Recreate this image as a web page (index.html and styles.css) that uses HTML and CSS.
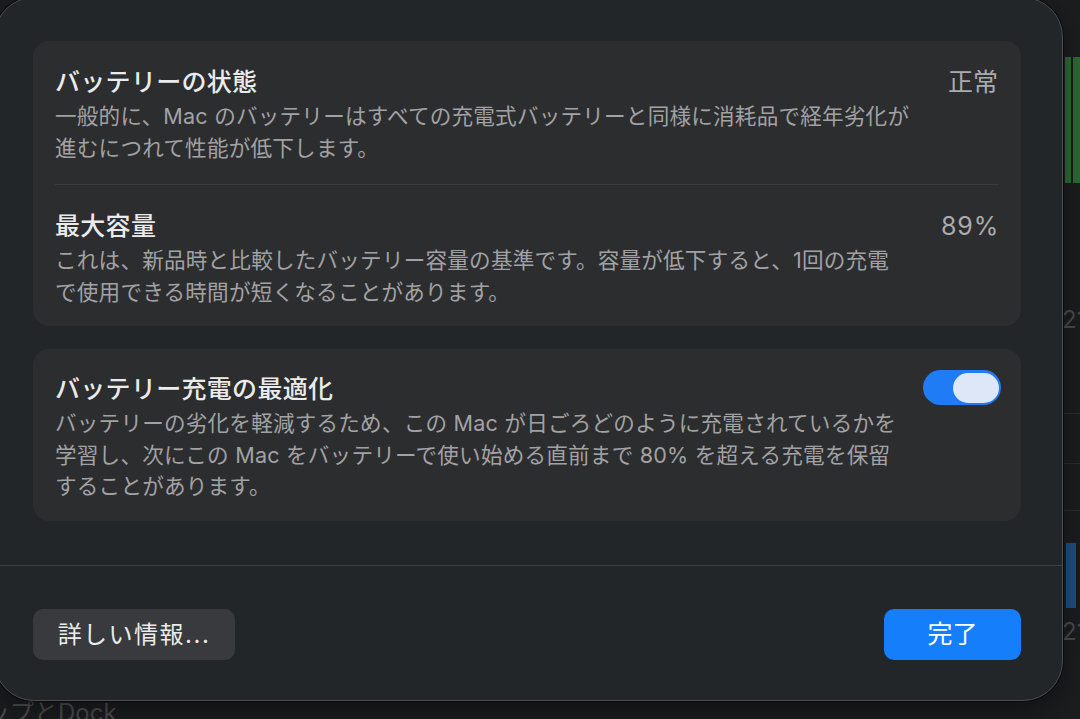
FILE: index.html
```html
<!DOCTYPE html>
<html lang="ja">
<head>
<meta charset="utf-8">
<title>バッテリーの状態</title>
<link rel="stylesheet" href="styles.css">
</head>
<body>
<div class="backdrop" aria-hidden="true">
  <div class="bar-green bar-green-a"></div>
  <div class="bar-green bar-green-b"></div>
  <div class="bg-label bg-label-a">21</div>
  <div class="bg-rule bg-rule-a"></div>
  <div class="bg-rule bg-rule-b"></div>
  <div class="bg-rule bg-rule-c"></div>
  <div class="bar-blue"></div>
  <div class="bg-label bg-label-b">21</div>
  <div class="bg-dock">ップとDock</div>
</div>

<div class="sheet">
  <div class="content">
    <section class="card">
      <div class="row">
        <div class="text">
          <div class="title">バッテリーの状態</div>
          <div class="desc">一般的に、Mac のバッテリーはすべての充電式バッテリーと同様に消耗品で経年劣化が<br>進むにつれて性能が低下します。</div>
        </div>
        <div class="value">正常</div>
      </div>
      <div class="row row-second">
        <div class="text">
          <div class="title">最大容量</div>
          <div class="desc">これは、新品時と比較したバッテリー容量の基準です。容量が低下すると、1回の充電<br>で使用できる時間が短くなることがあります。</div>
        </div>
        <div class="value value-num">89%</div>
      </div>
    </section>

    <section class="card card-toggle">
      <div class="row row-toggle">
        <div class="text">
          <div class="title">バッテリー充電の最適化</div>
          <div class="desc">バッテリーの劣化を軽減するため、この Mac が日ごろどのように充電されているかを<br>学習し、次にこの Mac をバッテリーで使い始める直前まで 80% を超える充電を保留<br>することがあります。</div>
        </div>
        <div class="toggle" role="switch" aria-checked="true"><span class="knob"></span></div>
      </div>
    </section>
  </div>

  <div class="footer">
    <button class="btn btn-secondary">詳しい情報...</button>
    <button class="btn btn-primary">完了</button>
  </div>
</div>
</body>
</html>
```

FILE: styles.css
```css
* { box-sizing: border-box; }

html, body {
  margin: 0;
  padding: 0;
}

body {
  width: 1080px;
  height: 719px;
  overflow: hidden;
  background: #1c1d1f;
  font-family: Inter, "Noto Sans CJK JP", sans-serif;
  position: relative;
}

/* ---- content visible behind the sheet ---- */
.backdrop {
  position: absolute;
  inset: 0;
}
.bar-green {
  position: absolute;
  top: 57px;
  height: 126px;
  background: #2e6a33;
}
.bar-green-a { left: 1065px; width: 6px; }
.bar-green-b { left: 1073px; width: 7px; }
.bar-blue {
  position: absolute;
  left: 1066px;
  top: 543px;
  width: 10px;
  height: 65px;
  background: #1d4f83;
}
.bg-label {
  position: absolute;
  left: 1062px;
  font-size: 24px;
  color: #4a4b4d;
  line-height: 1;
}
.bg-label-a { top: 308px; }
.bg-label-b { top: 620px; }
.bg-rule {
  position: absolute;
  left: 1064px;
  width: 16px;
  height: 1px;
  background: #2c2d2f;
}
.bg-rule-a { top: 413px; }
.bg-rule-b { top: 463px; }
.bg-rule-c { top: 510px; }
.bg-dock {
  position: absolute;
  left: -14px;
  top: 698px;
  font-size: 24px;
  color: #4c4d50;
  line-height: 30px;
}

/* ---- sheet ---- */
.sheet {
  position: relative;
  width: 1069px;
  height: 704px;
  margin: -3px 0 0 -6px;
  background: #232629;
  border: 1px solid #4c4f52;
  border-radius: 40px;
  box-shadow: 0 0 0 1px rgba(0, 0, 0, 0.55), 0 10px 30px rgba(0, 0, 0, 0.4);
  display: flex;
  flex-direction: column;
}

.content {
  padding: 43px 41px 44px 38px;
  display: flex;
  flex-direction: column;
  gap: 23px;
}

.card {
  background: #2c2d2f;
  border-radius: 16px;
  padding: 0 22px;
}

.row {
  display: flex;
  justify-content: space-between;
  align-items: flex-start;
  padding: 24px 0 20px;
}
.row-second {
  border-top: 1px solid #3b3c3e;
  padding: 24px 0 18px;
}
.row-toggle {
  padding: 23px 0 18px;
}

.text {
  white-space: nowrap;
}

.title {
  font-size: 25px;
  line-height: 34px;
  font-weight: 500;
  color: #ebebeb;
  letter-spacing: 0.3px;
}

.desc {
  margin-top: 2px;
  font-size: 21.6px;
  line-height: 31.5px;
  color: #a2a2a4;
  letter-spacing: 0.2px;
}

.value {
  font-size: 25px;
  line-height: 34px;
  color: #ababad;
  padding-right: 1px;
}
.value-num {
  letter-spacing: 0.8px;
  padding-right: 0;
}

.toggle {
  margin-top: -2px;
  margin-right: -2px;
  width: 78px;
  height: 35px;
  border-radius: 18px;
  background: #1f7cf4;
  display: flex;
  align-items: center;
  justify-content: flex-end;
  padding-right: 2px;
}
.knob {
  width: 46px;
  height: 30px;
  border-radius: 15px;
  background: #dde7f8;
}

/* ---- footer ---- */
.footer {
  border-top: 1px solid #3c3f42;
  padding: 43px 41px 0 38px;
  display: flex;
  justify-content: space-between;
  align-items: flex-start;
}

.btn {
  height: 51px;
  border: none;
  border-radius: 10px;
  font-family: Inter, "Noto Sans CJK JP", sans-serif;
  font-size: 24px;
  line-height: 51px;
  padding: 0;
  color: #ececec;
}
.btn-secondary {
  width: 202px;
  background: #383a3d;
  letter-spacing: 1.5px;
}
.btn-primary {
  width: 137px;
  background: #147efb;
  color: #ffffff;
  font-size: 25px;
}
```
